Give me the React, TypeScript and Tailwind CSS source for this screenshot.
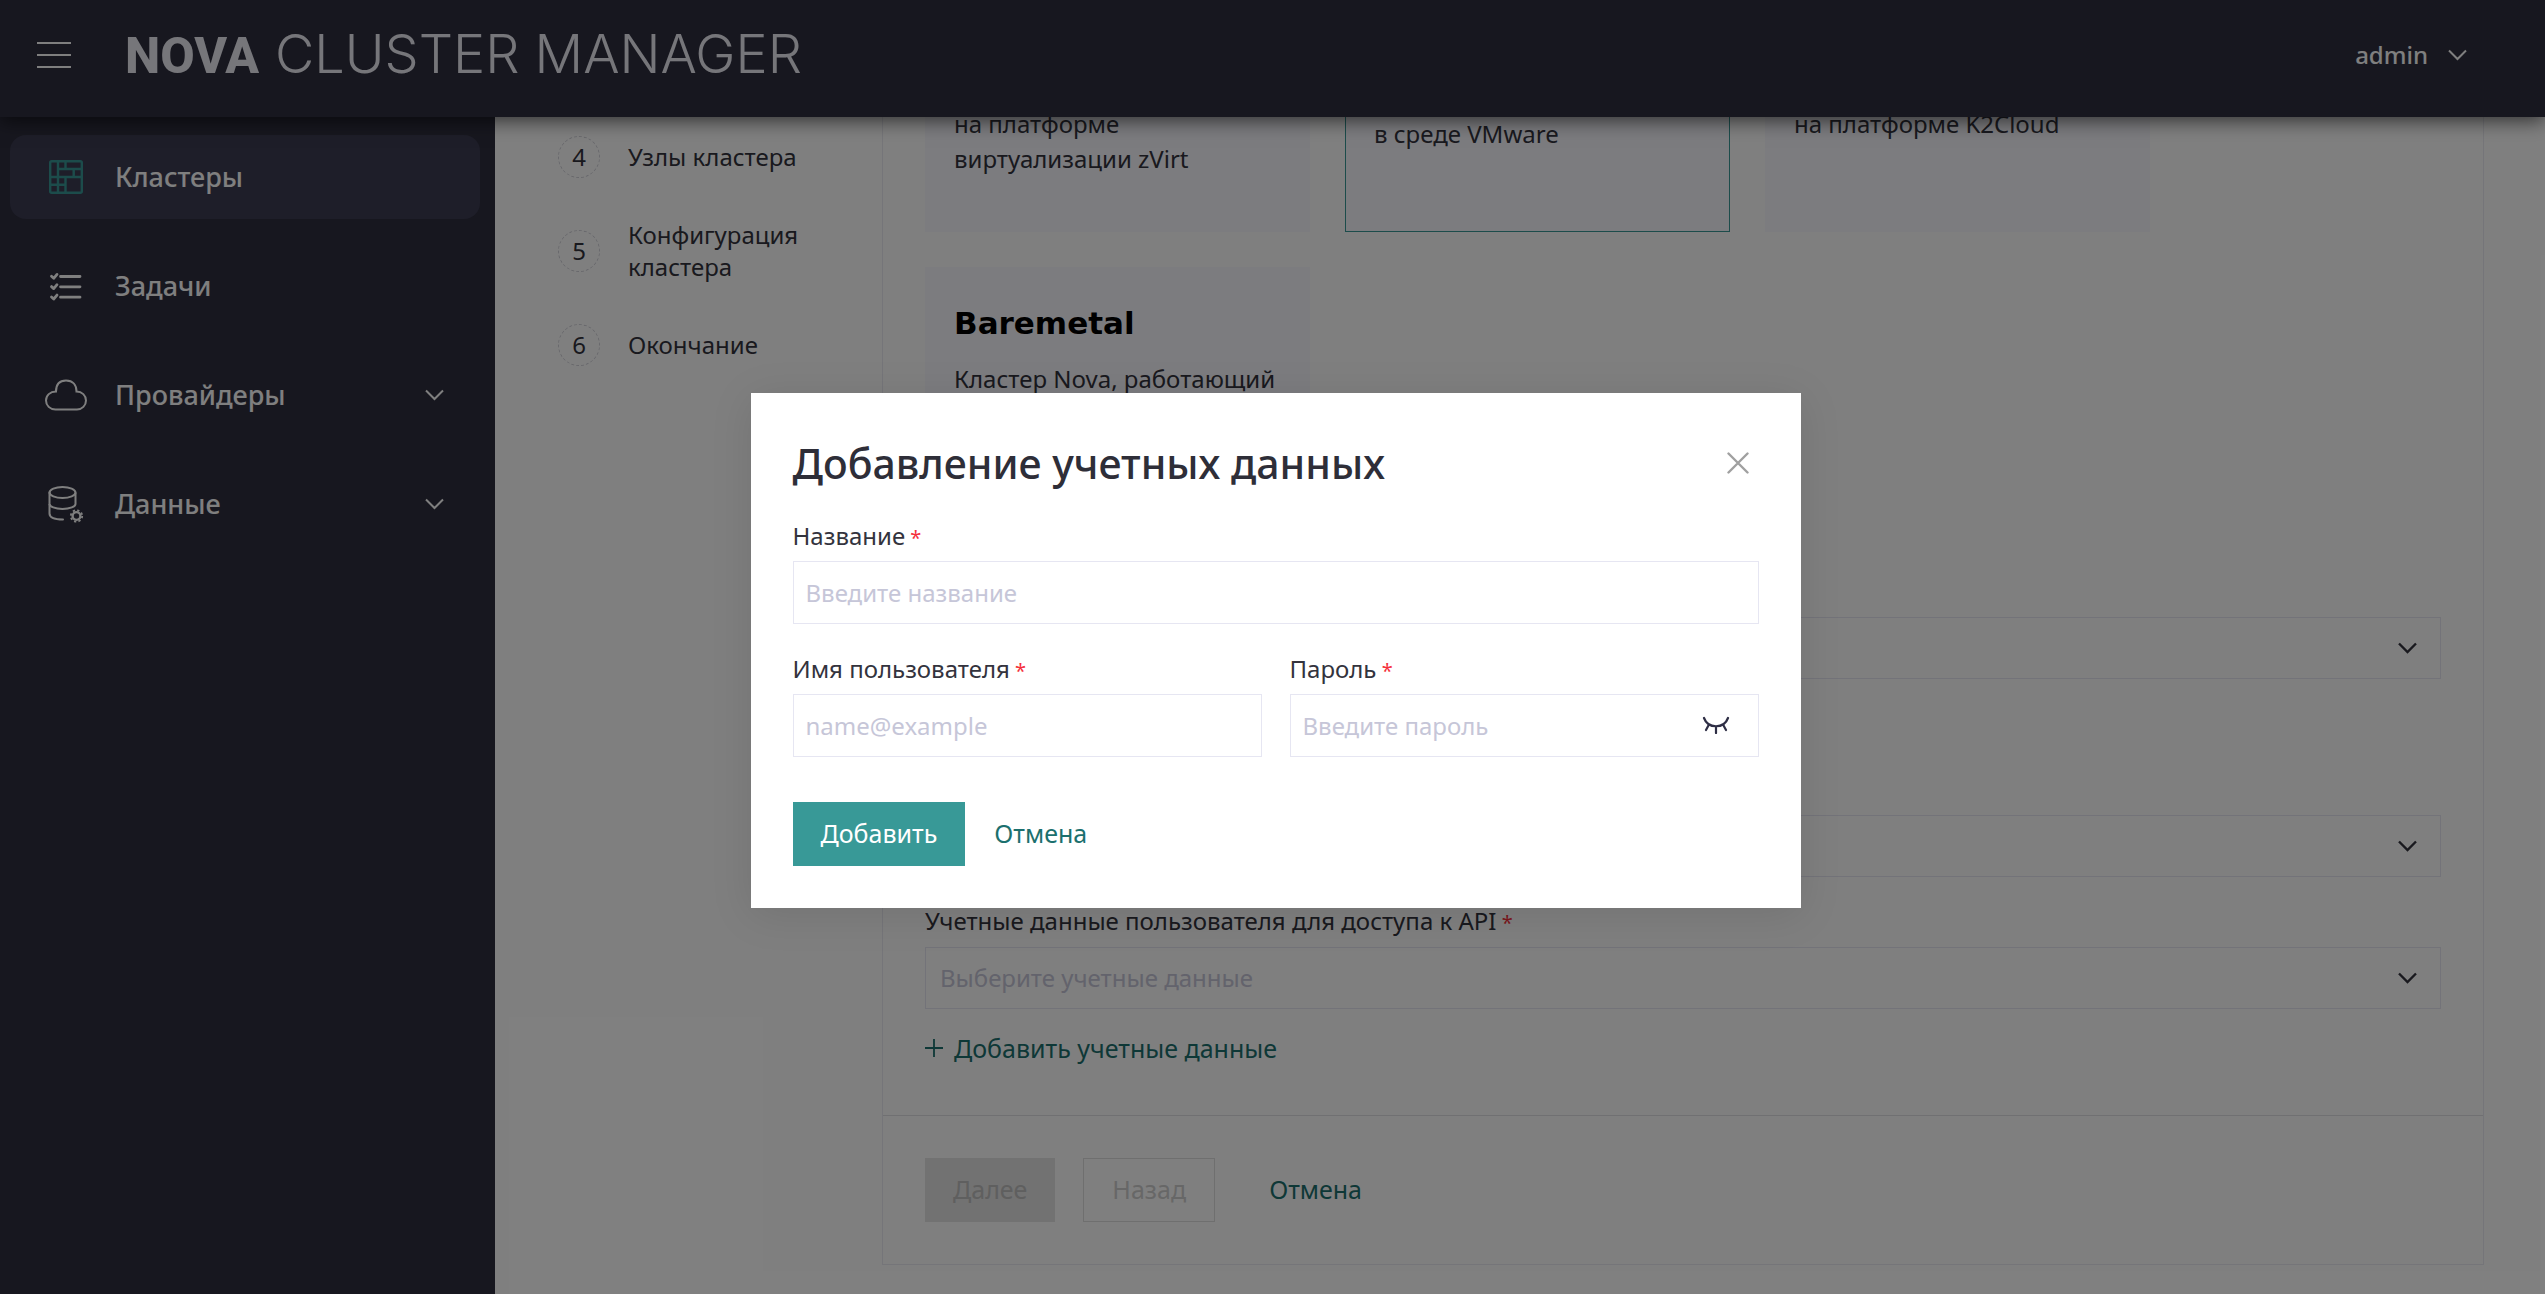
import React, { useState } from 'react';

const inputClass =
  'h-[63px] w-full border border-[#e6e6f2] bg-white px-3 text-2xl text-[#33333d] placeholder-[#c6c6d8] outline-none';

function Chevron({ className = '', strokeWidth = 2 }: { className?: string; strokeWidth?: number }) {
  return (
    <svg width="19" height="12" viewBox="0 0 19 12" fill="none" className={className} aria-hidden="true">
      <path d="M1 1.5L9.5 10L18 1.5" stroke="currentColor" strokeWidth={strokeWidth} />
    </svg>
  );
}

function ClustersIcon() {
  return (
    <svg width="34" height="34" viewBox="0 0 34 34" fill="none" stroke="#389997" strokeWidth="2.4">
      <rect x="1.2" y="1.2" width="31.6" height="31.6" rx="1.5" />
      <path d="M9 1V33M16.5 1V9M9 9H33M24.7 9V17M1 17H33M1 24.8H16.5M16.5 17V33" />
    </svg>
  );
}

function TasksIcon() {
  return (
    <svg width="34" height="34" viewBox="0 0 34 34" fill="none" stroke="white" strokeLinecap="round">
      <path d="M11.5 7.5H31M11.5 17.8H31M11.5 28.2H31" strokeWidth="2.8" />
      <path
        d="M2.5 7.3L4.7 9.3L8 5.4M2.5 17.6L4.7 19.6L8 15.7M2.5 28L4.7 30L8 26.1"
        strokeWidth="2.8"
        strokeLinejoin="round"
      />
    </svg>
  );
}

function CloudIcon() {
  return (
    <svg width="42" height="32" viewBox="0 0 42 32" fill="none" stroke="white" strokeWidth="2">
      <path d="M11 12.5C11 6 14 1.5 21 1.5S31.5 6 31.5 12.5C37 12.5 41 16.5 41 21.5S37 30.5 32 30.5H10.5C5 30.5 1 26.5 1 21.5S5 12.5 11 12.5Z" />
    </svg>
  );
}

function DataIcon() {
  return (
    <svg width="36" height="37" viewBox="0 0 36 37" fill="none" stroke="white" strokeWidth="2">
      <ellipse cx="14.5" cy="6.5" rx="13" ry="5.5" />
      <path d="M1.5 6.5V27.5C1.5 31.5 7 33.5 15 33.5" strokeLinecap="round" />
      <path d="M27.5 6.5V18C27.5 20.5 22 23 14.5 23S1.5 20.5 1.5 18" />
      <circle cx="28.5" cy="30" r="3.9" strokeWidth="2.4" />
      <circle cx="28.5" cy="30" r="5.7" strokeWidth="1.8" strokeDasharray="2.24 2.24" />
    </svg>
  );
}

const menu = [
  { title: 'Кластеры', icon: <ClustersIcon />, active: true },
  { title: 'Задачи', icon: <TasksIcon /> },
  { title: 'Провайдеры', icon: <CloudIcon />, nested: true },
  { title: 'Данные', icon: <DataIcon />, nested: true },
];

const steps = [
  { number: 4, title: 'Узлы кластера' },
  { number: 5, title: 'Конфигурация кластера' },
  { number: 6, title: 'Окончание' },
];

const platforms = [
  { id: 'zvirt', name: 'zVirt', text: 'Кластер Nova, работающий на платформе виртуализации zVirt' },
  { id: 'vmware', name: 'VMware', text: 'Кластер Nova, работающий в среде VMware', selected: true },
  { id: 'k2', name: 'K2Cloud', text: 'Кластер Nova, работающий на платформе K2Cloud' },
  { id: 'baremetal', name: 'Baremetal', text: 'Кластер Nova, работающий на физических серверах' },
];

function Header() {
  return (
    <header className="relative z-10 flex h-[117px] shrink-0 items-center bg-[#2e2e3e] pr-[78px] pb-2 pl-[37px] text-white shadow-[0_4px_18px_rgba(0,0,0,0.6)]">
      <button type="button" aria-label="Меню" className="flex w-[34px] flex-col gap-2.5">
        <span className="h-0.5 bg-white" />
        <span className="h-0.5 bg-white" />
        <span className="h-0.5 bg-white" />
      </button>
      <div className="ml-[54px] flex items-baseline gap-4 whitespace-nowrap text-[#ededf5]">
        <span className="font-['Roboto',sans-serif] text-[50px] leading-[60px] font-extrabold">NOVA</span>
        <span className="font-['Inter',sans-serif] text-[54px] leading-[60px] font-light">CLUSTER MANAGER</span>
      </div>
      <button type="button" className="ml-auto flex items-center gap-5 text-2xl font-medium">
        admin
        <Chevron />
      </button>
    </header>
  );
}

function Sidebar() {
  return (
    <nav className="w-[495px] shrink-0 bg-[#2e2e3e] pt-[18px] pr-[15px] pl-2.5">
      <ul className="flex flex-col gap-[25px]">
        {menu.map((item) => (
          <li key={item.title}>
            <a
              href="#"
              className={`flex h-[84px] items-center rounded-2xl pr-9 pl-[35px] text-[27px] font-medium text-white ${
                item.active ? 'bg-[#3c3c52]' : ''
              }`}
            >
              <span className="mr-7 flex w-[42px] justify-center">{item.icon}</span>
              {item.title}
              {item.nested && <Chevron className="ml-auto" />}
            </a>
          </li>
        ))}
      </ul>
    </nav>
  );
}

function Steps() {
  return (
    <ol start={4} className="flex w-[324px] shrink-0 flex-col gap-[41px] pt-[19px] text-2xl">
      {steps.map((step) => (
        <li key={step.number} className="flex items-center gap-7">
          <span className="flex size-[42px] shrink-0 items-center justify-center rounded-full border border-dashed border-[#d0d0d8]">
            {step.number}
          </span>
          <span className="w-[200px]">{step.title}</span>
        </li>
      ))}
    </ol>
  );
}

function PlatformCard({ name, text, selected }: { name: string; text: string; selected?: boolean }) {
  return (
    <button
      type="button"
      className={`flex h-[255px] w-[385px] flex-col gap-4 border bg-[#f8f8fe] px-7 pt-[33px] text-left ${
        selected ? 'border-[#389997]' : 'border-transparent'
      }`}
    >
      <span
        className={`font-['DejaVu_Sans',sans-serif] text-[31px] leading-[44px] font-bold text-black ${
          selected ? 'h-[54px]' : 'h-11'
        }`}
      >
        {name}
      </span>
      <span className="text-2xl leading-[35px]">{text}</span>
    </button>
  );
}

function SelectBox({ id, placeholder = '', label }: { id: string; placeholder?: string; label?: string }) {
  return (
    <div className="relative">
      <select
        id={id}
        aria-label={label}
        defaultValue=""
        className="block h-[62px] w-full appearance-none border border-[#e6e6f2] bg-white px-3.5 text-2xl text-[#c6c6d8]"
      >
        <option value="">{placeholder}</option>
      </select>
      <Chevron className="pointer-events-none absolute top-1/2 right-6 -translate-y-1/2" strokeWidth={2.4} />
    </div>
  );
}

function Required() {
  return <span className="text-xl leading-6 text-[#f5303c]"> *</span>;
}

function ClusterForm() {
  return (
    <div className="flex min-w-0 flex-1 flex-col justify-end">
      <div className="border border-[#ebebf2]">
        <div className="px-[42px] pb-[51px]">
          <div className="flex flex-wrap gap-[35px]">
            {platforms.map((p) => (
              <PlatformCard key={p.id} name={p.name} text={p.text} selected={p.selected} />
            ))}
          </div>
          <div className="mt-[95px] mb-[136px]">
            <SelectBox id="provider" label="Провайдер" />
          </div>
          <SelectBox id="domain" label="Базовый домен" />
          <label htmlFor="api-credentials" className="mt-7 mb-2.5 block text-2xl">
            Учетные данные пользователя для доступа к API
            <Required />
          </label>
          <SelectBox id="api-credentials" placeholder="Выберите учетные данные" />
          <button
            type="button"
            className="mt-[23px] flex items-center gap-[11px] text-[25px] leading-8 text-[#1c706e]"
          >
            <svg width="18" height="18" viewBox="0 0 18 18" stroke="currentColor" strokeWidth="1.8">
              <path d="M9 0V18M0 9H18" />
            </svg>
            Добавить учетные данные
          </button>
        </div>
        <div className="flex items-center border-t border-[#e0e0e4] px-[42px] py-[42px] text-[25px]">
          <button type="button" disabled className="h-16 bg-[#e4e4e4] px-7 text-[#bebebe]">
            Далее
          </button>
          <button type="button" disabled className="ml-7 h-16 border border-[#dedede] px-7 text-[#cfcfcf]">
            Назад
          </button>
          <button type="button" className="ml-[54px] h-16 text-[#1c706e]">
            Отмена
          </button>
        </div>
      </div>
    </div>
  );
}

function CredentialsModal() {
  const [passwordVisible, setPasswordVisible] = useState(false);

  return (
    <div className="absolute inset-0 z-20 flex items-center justify-center bg-black/50 pt-1.5 pl-1.5">
      <form
        role="dialog"
        aria-labelledby="modal-title"
        className="w-[1050px] bg-white px-[42px] pt-11 pb-[42px] text-2xl shadow-[0_6px_40px_rgba(0,0,0,0.1)]"
      >
        <div className="mb-[31px] flex items-center justify-between">
          <h2 id="modal-title" className="text-[41px] leading-[52px] font-medium text-[#2e2e38]">
            Добавление учетных данных
          </h2>
          <button type="button" aria-label="Закрыть" className="flex size-[42px] items-center justify-center">
            <svg width="22" height="22" viewBox="0 0 22 22" stroke="#a0a0a0" strokeWidth="2.4" strokeLinecap="round">
              <path d="M1.5 1.5L20.5 20.5M20.5 1.5L1.5 20.5" />
            </svg>
          </button>
        </div>

        <label htmlFor="name" className="mb-[9px] block">
          Название
          <Required />
        </label>
        <input id="name" type="text" placeholder="Введите название" className={inputClass} />

        <div className="mt-[29px] grid grid-cols-2 gap-7">
          <div>
            <label htmlFor="username" className="mb-[9px] block">
              Имя пользователя
              <Required />
            </label>
            <input id="username" type="text" placeholder="name@example" className={inputClass} />
          </div>
          <div>
            <label htmlFor="password" className="mb-[9px] block">
              Пароль
              <Required />
            </label>
            <div className="relative">
              <input
                id="password"
                type={passwordVisible ? 'text' : 'password'}
                placeholder="Введите пароль"
                className={inputClass}
              />
              <button
                type="button"
                aria-label="Показать пароль"
                onClick={() => setPasswordVisible(!passwordVisible)}
                className="absolute inset-y-0 right-[29px] flex items-center"
              >
                <svg width="28" height="18" viewBox="0 0 28 18" fill="none" stroke="#2e2e45" strokeWidth="2.2">
                  <path
                    d="M2 2C6 13 22 13 26 2M14 10.500V17M7 8.500L4 14M21 8.500L24 14"
                    strokeLinecap="round"
                  />
                </svg>
              </button>
            </div>
          </div>
        </div>

        <div className="mt-[45px] flex items-center gap-[29px] text-[25px]">
          <button type="submit" className="h-16 bg-[#389997] px-7 text-white">
            Добавить
          </button>
          <button type="button" className="h-16 text-[#1c706e]">
            Отмена
          </button>
        </div>
      </form>
    </div>
  );
}

export default function App() {
  return (
    <div className="relative flex h-screen flex-col overflow-hidden bg-white font-['Noto_Sans',sans-serif] text-[#33333d]">
      <Header />
      <div className="flex min-h-0 flex-1">
        <Sidebar />
        <main className="flex min-w-0 flex-1 overflow-hidden pr-[61px] pb-[29px] pl-[63px]">
          <Steps />
          <ClusterForm />
        </main>
      </div>
      <CredentialsModal />
    </div>
  );
}
